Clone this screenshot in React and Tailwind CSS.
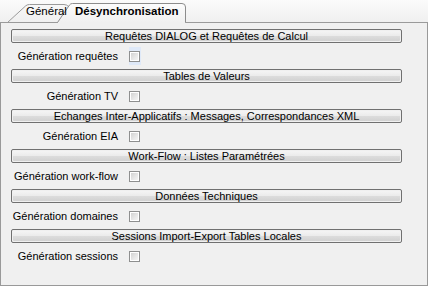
import React from "react";

const sections = [
  { title: "Requêtes DIALOG et Requêtes de Calcul", label: "Génération requêtes", focus: true },
  { title: "Tables de Valeurs", label: "Génération TV" },
  { title: "Echanges Inter-Applicatifs : Messages, Correspondances XML", label: "Génération EIA" },
  { title: "Work-Flow : Listes Paramétrées", label: "Génération work-flow" },
  { title: "Données Techniques", label: "Génération domaines" },
  { title: "Sessions Import-Export Tables Locales", label: "Génération sessions" },
];

function Bar({ title }) {
  return (
    <div className="w-[391px] h-[14px] rounded-[2px] border border-[#707070] p-px">
      <div className="h-full w-full rounded-[1px] bg-[linear-gradient(to_bottom,#f4f4f4_0%,#ececec_45%,#dddddd_50%,#d2d2d2_100%)] flex items-center justify-center leading-none text-[11px] text-black whitespace-nowrap">
        {title}
      </div>
    </div>
  );
}

function Checkbox() {
  return (
    <div className="w-[11px] h-[11px] border border-[#8e8f8f] bg-white p-px">
      <div className="w-full h-full bg-[linear-gradient(135deg,#d2d2d2_0%,#e8e8e8_60%,#f4f4f4_100%)]" />
    </div>
  );
}

export default function App() {
  return (
    <div
      className="w-[428px] h-[286px] bg-[#f0f0f0] flex flex-col text-black"
      style={{ fontFamily: '"Liberation Sans", Arial, sans-serif' }}
    >
      <div className="relative h-[22px] bg-[linear-gradient(to_bottom,#fbfbfb,#f0f0f0)]">
        <svg className="absolute left-0 top-0" width="428" height="23" viewBox="0 0 428 23">
          <defs>
            <linearGradient id="act" x1="0" y1="0" x2="0" y2="1">
              <stop offset="0" stopColor="#fcfcfc" />
              <stop offset="1" stopColor="#f0f0f0" />
            </linearGradient>
            <linearGradient id="inact" x1="0" y1="0" x2="0" y2="1">
              <stop offset="0" stopColor="#f8f8f8" />
              <stop offset="1" stopColor="#efefef" />
            </linearGradient>
          </defs>
          <path d="M7.5,22.5 L25.5,6 Q27,4.5 29.5,4.5 L64,4.5 Q67,4.5 69,7 L74,13" fill="url(#inact)" stroke="#9a9a9a" />
          <line x1="0" y1="22.5" x2="58" y2="22.5" stroke="#9a9a9a" />
          <line x1="185" y1="22.5" x2="428" y2="22.5" stroke="#9a9a9a" />
          <path d="M57.5,22.5 L69.5,5 Q70.5,3.5 72.5,3.5 L182,3.5 Q185.5,3.5 185.5,7 L185.5,22.5 Z" fill="url(#act)" stroke="none" />
          <path d="M57.5,22.5 L69.5,5 Q70.5,3.5 72.5,3.5 L182,3.5 Q185.5,3.5 185.5,7 L185.5,22.5" fill="none" stroke="#8c8c8c" />
        </svg>
        <div className="relative flex items-start pt-[5px] text-[11.5px] leading-[13px] whitespace-nowrap">
          <span className="ml-[26px] w-[49px] text-[#000]">Général</span>
          <span className="font-bold">Désynchronisation</span>
        </div>
      </div>
      <div className="h-[264px] border-x border-b border-[#999] pt-[7px] pl-[10px] flex flex-col">
        {sections.map((s) => (
          <div key={s.title} className="flex flex-col">
            <Bar title={s.title} />
            <div className="h-[26px] flex items-center">
              <div className="w-[107px] shrink-0 flex justify-end">
                <span className="text-[11px] leading-none whitespace-nowrap">{s.label}</span>
              </div>
              <div className={"ml-[11px] h-[18px] w-[12px] flex items-center " + (s.focus ? "bg-[#dfe9f8]" : "")}>
                <Checkbox />
              </div>
            </div>
          </div>
        ))}
      </div>
    </div>
  );
}
